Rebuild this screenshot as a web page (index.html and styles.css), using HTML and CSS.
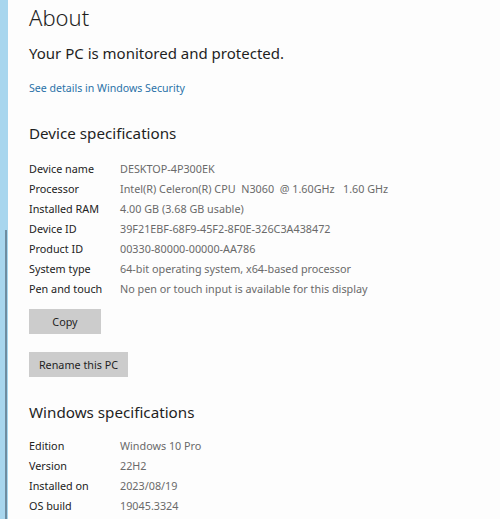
FILE: index.html
```html
<!DOCTYPE html>
<html lang="en">

<head>
    <meta charset="UTF-8">
    <meta name="viewport" content="width=device-width, initial-scale=1.0">
    <title>About</title>
    <link rel="stylesheet" href="styles.css">
</head>

<body>
    <div class="page">
        <div class="edge">
            <div class="edge-line"></div>
        </div>

        <main class="content">
            <h1 class="title">About</h1>
            <p class="status">Your PC is monitored and protected.</p>
            <a class="link" href="#">See details in Windows Security</a>

            <h2 class="section">Device specifications</h2>
            <div class="specs">
                <div class="spec-row"><span class="label">Device name</span><span class="value">DESKTOP-4P300EK</span></div>
                <div class="spec-row"><span class="label">Processor</span><span class="value">Intel(R) Celeron(R) CPU&nbsp; N3060&nbsp; @ 1.60GHz&nbsp;&nbsp; 1.60 GHz</span></div>
                <div class="spec-row"><span class="label">Installed RAM</span><span class="value">4.00 GB (3.68 GB usable)</span></div>
                <div class="spec-row"><span class="label">Device ID</span><span class="value">39F21EBF-68F9-45F2-8F0E-326C3A438472</span></div>
                <div class="spec-row"><span class="label">Product ID</span><span class="value">00330-80000-00000-AA786</span></div>
                <div class="spec-row"><span class="label">System type</span><span class="value">64-bit operating system, x64-based processor</span></div>
                <div class="spec-row"><span class="label">Pen and touch</span><span class="value">No pen or touch input is available for this display</span></div>
            </div>

            <button class="btn btn-copy">Copy</button>
            <button class="btn btn-rename">Rename this PC</button>

            <h2 class="section section-win">Windows specifications</h2>
            <div class="specs specs-win">
                <div class="spec-row"><span class="label">Edition</span><span class="value">Windows 10 Pro</span></div>
                <div class="spec-row"><span class="label">Version</span><span class="value">22H2</span></div>
                <div class="spec-row"><span class="label">Installed on</span><span class="value">2023/08/19</span></div>
                <div class="spec-row"><span class="label">OS build</span><span class="value">19045.3324</span></div>
            </div>
        </main>
    </div>
</body>

</html>
```

FILE: styles.css
```css
body {
    margin: 0;
    background-color: #fdfdfd;
    font-family: "Noto Sans", "Open Sans", sans-serif;
    color: #1f1f1f;
    overflow: hidden;
}

.page {
    display: flex;
    height: 519px;
}

/* blue strip of the window behind */
.edge {
    width: 8px;
    flex-shrink: 0;
    background-color: #a8d6ee;
    display: flex;
    flex-direction: column;
    justify-content: flex-end;
    align-items: flex-end;
    padding-right: 1px;
    box-sizing: border-box;
}

.edge-line {
    width: 2px;
    height: 289px;
    background-color: #6e8ca0;
}

.content {
    padding-left: 21px;
    display: flex;
    flex-direction: column;
    align-items: flex-start;
}

.title {
    font-size: 22px;
    font-weight: 300;
    margin: 2px 0 0;
    line-height: 30px;
}

.status {
    font-size: 15px;
    margin: 11px 0 0;
    line-height: 20px;
}

.link {
    font-size: 10.6px;
    color: #2a72a8;
    text-decoration: none;
    margin-top: 17px;
    line-height: 16px;
}

.section {
    font-size: 15.2px;
    font-weight: 400;
    margin: 25px 0 0;
    line-height: 24px;
}

.section-win {
    margin-top: 23px;
}

.specs {
    margin-top: 13px;
}

.specs-win {
    margin-top: 11px;
}

.spec-row {
    display: flex;
    height: 20px;
    align-items: center;
    font-size: 10.8px;
}

.label {
    width: 91px;
    color: #222;
}

.value {
    color: #6a6a6a;
    white-space: nowrap;
}

.btn {
    font-family: inherit;
    font-size: 10.8px;
    color: #1f1f1f;
    background-color: #cccccc;
    border: none;
    height: 25px;
    padding: 0;
}

.btn-copy {
    width: 72px;
    margin-top: 11px;
}

.btn-rename {
    width: 99px;
    margin-top: 18px;
}
```
